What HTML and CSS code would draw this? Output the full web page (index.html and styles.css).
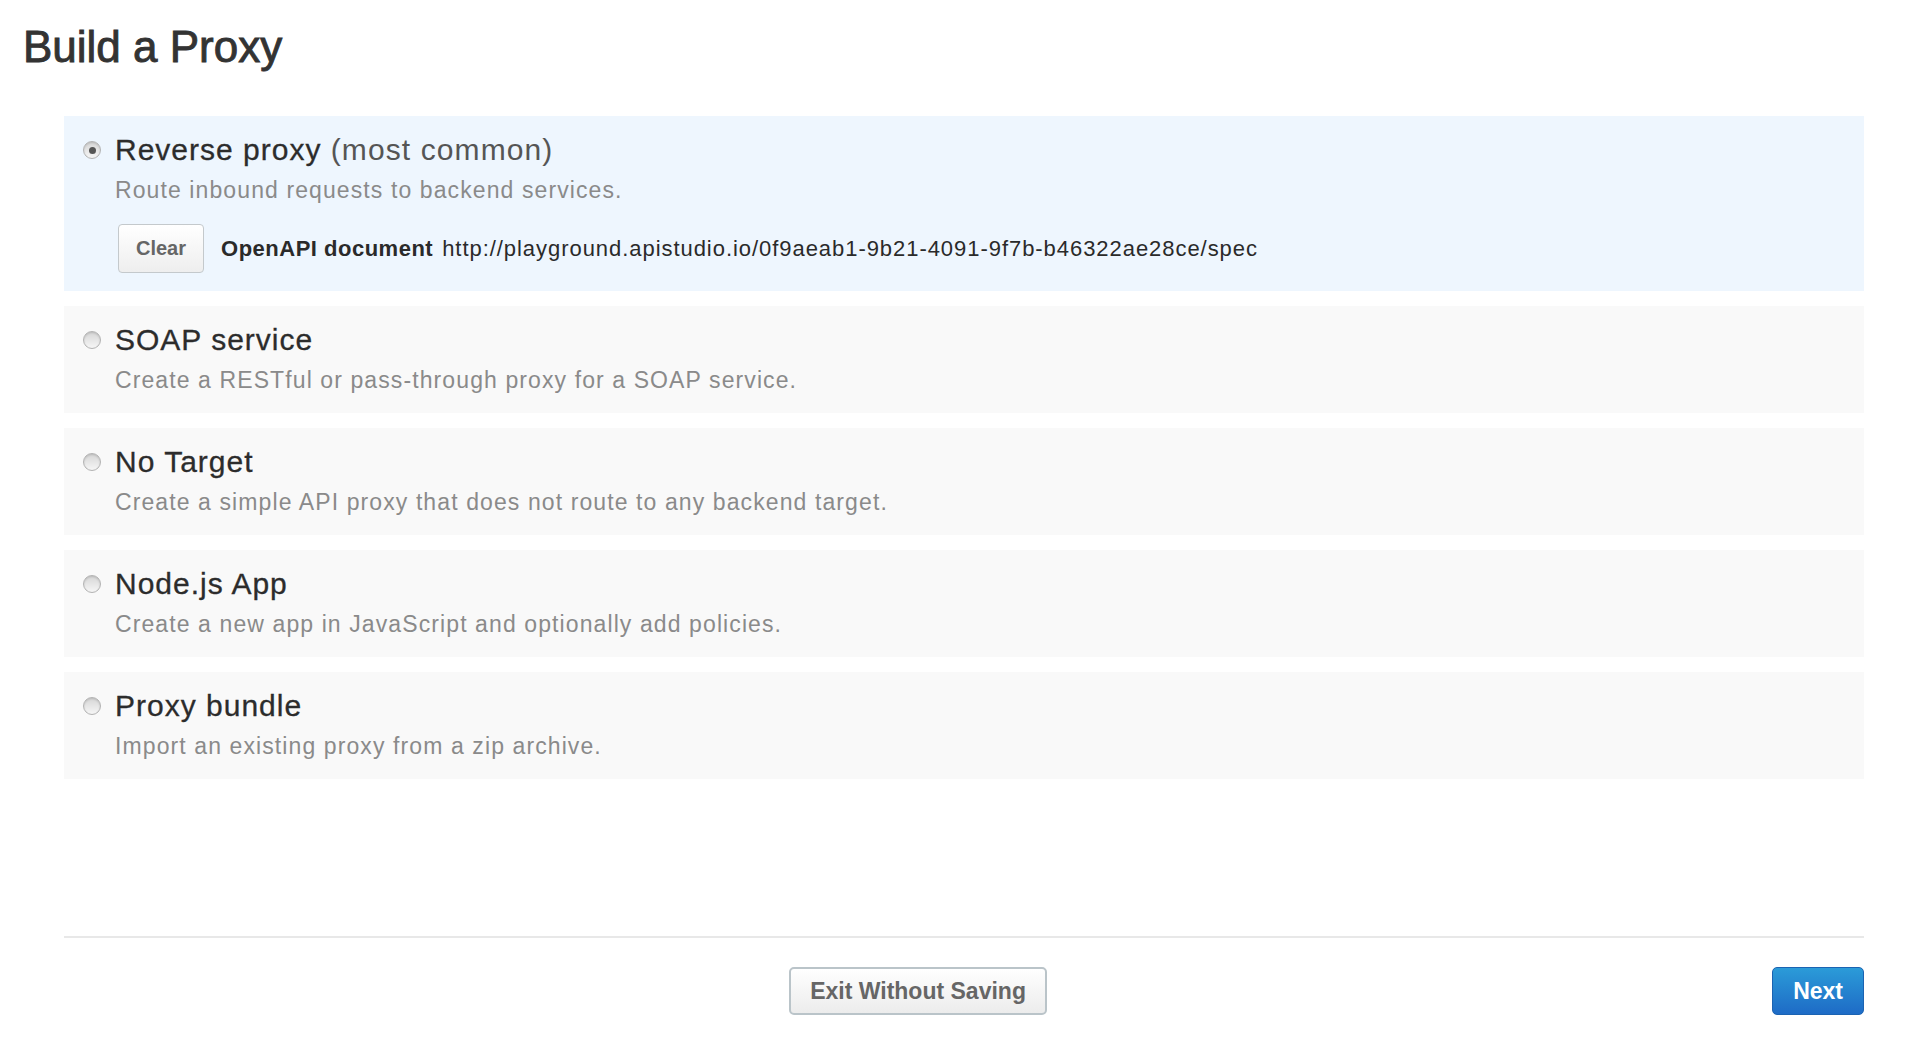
FILE: index.html
```html
<!DOCTYPE html>
<html lang="en">
<head>
<meta charset="utf-8">
<title>Build a Proxy</title>
<link rel="stylesheet" href="styles.css">
</head>
<body>
<div class="page">
  <h1 class="page-title">Build a Proxy</h1>

  <div class="options">
    <div class="option option--selected">
      <span class="radio radio--checked"></span>
      <div class="option-body">
        <div class="option-title">Reverse proxy <span class="option-note">(most common)</span></div>
        <div class="option-desc">Route inbound requests to backend services.</div>
        <div class="spec-row">
          <button class="btn btn-clear">Clear</button>
          <span class="spec-label">OpenAPI document</span>
          <span class="spec-url">http://playground.apistudio.io/0f9aeab1-9b21-4091-9f7b-b46322ae28ce/spec</span>
        </div>
      </div>
    </div>

    <div class="option">
      <span class="radio"></span>
      <div class="option-body">
        <div class="option-title">SOAP service</div>
        <div class="option-desc">Create a RESTful or pass-through proxy for a SOAP service.</div>
      </div>
    </div>

    <div class="option">
      <span class="radio"></span>
      <div class="option-body">
        <div class="option-title">No Target</div>
        <div class="option-desc">Create a simple API proxy that does not route to any backend target.</div>
      </div>
    </div>

    <div class="option">
      <span class="radio"></span>
      <div class="option-body">
        <div class="option-title">Node.js App</div>
        <div class="option-desc">Create a new app in JavaScript and optionally add policies.</div>
      </div>
    </div>

    <div class="option">
      <span class="radio"></span>
      <div class="option-body">
        <div class="option-title">Proxy bundle</div>
        <div class="option-desc">Import an existing proxy from a zip archive.</div>
      </div>
    </div>
  </div>

  <div class="footer">
    <div class="footer-center">
      <button class="btn btn-exit">Exit Without Saving</button>
    </div>
    <button class="btn btn-next">Next</button>
  </div>
</div>
</body>
</html>
```

FILE: styles.css
```css
html, body {
  margin: 0;
  padding: 0;
  background: #ffffff;
}

body {
  font-family: "Liberation Sans", Arial, Helvetica, sans-serif;
  color: #333333;
}

.page {
  padding: 21px 48px 0 23px;
}

.page-title {
  margin: 0;
  font-size: 44px;
  line-height: 52px;
  font-weight: normal;
  color: #333333;
  -webkit-text-stroke: 0.9px #333333;
}

.options {
  margin: 43px 0 0 41px;
  display: flex;
  flex-direction: column;
  gap: 15px;
}

.option {
  display: flex;
  align-items: flex-start;
  background: #f9f9f9;
  padding: 16px 0 18px 19px;
}

.option--selected {
  background: #eef6fe;
}

.radio {
  flex: none;
  box-sizing: border-box;
  width: 18px;
  height: 18px;
  margin-top: 9px;
  margin-right: 14px;
  border-radius: 50%;
  border: 1px solid #b3b3b3;
  background: linear-gradient(#d6d6d6, #f6f6f6);
  box-shadow: inset 0 1px 2px rgba(0,0,0,0.14);
  position: relative;
}

.radio--checked::after {
  content: "";
  position: absolute;
  left: 4.5px;
  top: 4.5px;
  width: 7px;
  height: 7px;
  border-radius: 50%;
  background: #555555;
}

.option-body {
  display: flex;
  flex-direction: column;
}

.option-title {
  font-size: 30px;
  line-height: 36px;
  letter-spacing: 1px;
  color: #2c2c2c;
  -webkit-text-stroke: 0.3px #2c2c2c;
}

.option-note {
  color: #555555;
  letter-spacing: 1.1px;
  -webkit-text-stroke: 0;
}

.option-desc {
  margin-top: 7px;
  font-size: 23px;
  line-height: 30px;
  letter-spacing: 1.1px;
  color: #8a8a8a;
}

.spec-row {
  display: flex;
  align-items: center;
  margin-top: 19px;
  margin-left: 3px;
}

.spec-label {
  margin-left: 17px;
  font-size: 22px;
  font-weight: bold;
  letter-spacing: 0.5px;
  color: #2a2a2a;
}

.spec-url {
  margin-left: 9px;
  font-size: 22px;
  letter-spacing: 0.95px;
  color: #2a2a2a;
}

.btn {
  font-family: "Liberation Sans", Arial, Helvetica, sans-serif;
  font-weight: bold;
  cursor: pointer;
  box-sizing: border-box;
}

.btn-clear {
  height: 49px;
  padding: 0 17px;
  font-size: 20px;
  color: #666666;
  background: linear-gradient(#ffffff, #eeeeee);
  border: 1px solid #c4c9cc;
  border-radius: 4px;
}

.footer {
  margin: 157px 0 0 41px;
  border-top: 2px solid #e8e8e8;
  padding-top: 29px;
  display: flex;
  align-items: center;
}

.footer-center {
  flex: 1;
  display: flex;
  justify-content: center;
}

.btn-exit {
  height: 48px;
  padding: 0 19px;
  font-size: 23px;
  color: #666666;
  background: linear-gradient(#ffffff, #ececec);
  border: 2px solid #bac4c9;
  border-radius: 5px;
}

.btn-next {
  height: 48px;
  padding: 0 20px;
  font-size: 23px;
  color: #ffffff;
  background: linear-gradient(#2b9bd8, #1e6bc6);
  border: 1px solid #1b63b2;
  border-radius: 5px;
}
```
